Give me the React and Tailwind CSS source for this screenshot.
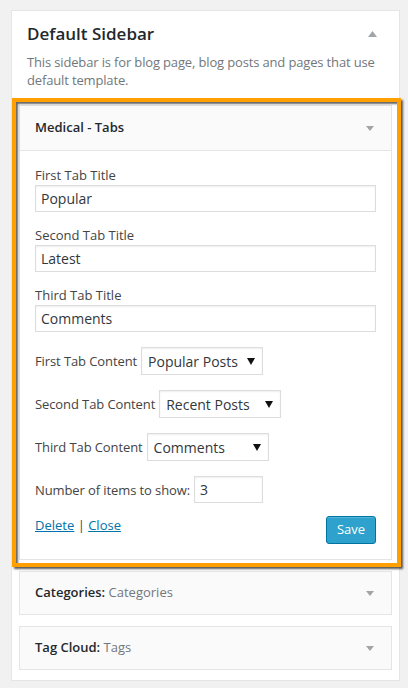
import React from "react";

const font = { fontFamily: '"Open Sans", "Noto Sans", sans-serif' };

function Down({ className = "" }) {
  return (
    <svg width="8" height="5" viewBox="0 0 8 5" className={className}>
      <path d="M0 0 L8 0 L4 5 Z" fill="#a0a5aa" />
    </svg>
  );
}

function Up() {
  return (
    <svg width="9" height="6" viewBox="0 0 9 6">
      <path d="M0 6 L9 6 L4.5 0 Z" fill="#a0a5aa" />
    </svg>
  );
}

function Field({ label, value }) {
  return (
    <div className="mb-[14px]">
      <div className="text-[13px] leading-[18px] text-[#444]">{label}</div>
      <div className="mt-[1px] h-[27px] w-full border border-[#dddddd] bg-white shadow-[inset_0_1px_2px_rgba(0,0,0,0.07)] px-[5px] flex items-center text-[14px] text-[#32373c]">
        {value}
      </div>
    </div>
  );
}

function SelectRow({ label, value }) {
  return (
    <div className="flex items-center gap-[4px] mb-[15px]">
      <span className="text-[13px] leading-[18px] text-[#444] tracking-[-0.1px]">{label}</span>
      <div className="h-[28px] w-[122px] border border-[#dddddd] bg-white shadow-[inset_0_1px_2px_rgba(0,0,0,0.07)] pl-[6px] pr-[7px] flex items-center justify-between text-[14px] text-[#32373c]">
        <span>{value}</span>
        <svg width="8" height="7" viewBox="0 0 8 7">
          <path d="M0 0 L8 0 L4 7 Z" fill="#111" />
        </svg>
      </div>
    </div>
  );
}

function Collapsed({ bold, rest }) {
  return (
    <div className="h-[44px] border border-[#e5e5e5] bg-[#fafafa] flex items-center justify-between pl-[15px] pr-[17px] mb-[11px] last:mb-0">
      <span className="text-[13px] text-[#23282d]">
        <span className="font-semibold">{bold}</span>{" "}
        <span className="text-[#72777c]">{rest}</span>
      </span>
      <Down />
    </div>
  );
}

export default function App() {
  return (
    <div className="min-h-[688px] w-[408px] bg-[#f1f1f1] pt-[10px]" style={font}>
      <div className="ml-[11px] w-[389px] bg-white border border-[#e5e5e5] pt-[12px] pb-[10px] px-[7px]">
        <div className="flex items-center justify-between pl-[8px] pr-[15px]">
          <h2 className="text-[17px] leading-[22px] font-semibold text-[#23282d]">Default Sidebar</h2>
          <Up />
        </div>
        <p className="mt-[8px] pl-[8px] pr-0 text-[13px] leading-[18px] text-[#72777c] tracking-[-0.15px]">
          This sidebar is for blog page, blog posts and pages that use default template.
        </p>

        <div className="relative mt-[16px] mb-[11px] border border-[#e5e5e5] bg-white">
          <div className="pointer-events-none absolute -left-[8px] -top-[8px] -right-[10px] -bottom-[8px] border-4 border-[#ffa000] shadow-[2px_2px_2px_rgba(0,0,0,0.65),inset_2px_2px_2px_rgba(0,0,0,0.6)]" />
          <div className="h-[45px] bg-[#fafafa] border-b border-[#e5e5e5] flex items-center justify-between pl-[15px] pr-[17px]">
            <span className="text-[13px] font-semibold text-[#23282d]">Medical - Tabs</span>
            <Down />
          </div>
          <div className="px-[15px] pt-[15px] pb-[15px]">
            <Field label="First Tab Title" value="Popular" />
            <Field label="Second Tab Title" value="Latest" />
            <Field label="Third Tab Title" value="Comments" />
            <div className="h-[1px]" />
            <SelectRow label="First Tab Content" value="Popular Posts" />
            <SelectRow label="Second Tab Content" value="Recent Posts" />
            <SelectRow label="Third Tab Content" value="Comments" />
            <div className="flex items-center gap-[4px] mb-[14px]">
              <span className="text-[13px] leading-[18px] text-[#444] tracking-[-0.1px]">Number of items to show:</span>
              <div className="h-[27px] w-[69px] border border-[#dddddd] bg-white shadow-[inset_0_1px_2px_rgba(0,0,0,0.07)] px-[5px] flex items-center text-[14px] text-[#32373c]">
                3
              </div>
            </div>
            <div className="flex items-start justify-between">
              <div className="text-[13px] leading-[18px] text-[#444] mt-[-1px]">
                <a href="#" className="text-[#0073aa] underline">Delete</a>
                <span> | </span>
                <a href="#" className="text-[#0073aa] underline">Close</a>
              </div>
              <button className="mt-[-1px] h-[28px] w-[50px] rounded-[3px] border border-[#0074a2] bg-[#2ea2cc] text-white text-[13px] shadow-[inset_0_1px_0_rgba(120,200,230,0.5)]">
                Save
              </button>
            </div>
          </div>
        </div>

        <Collapsed bold="Categories:" rest="Categories" />
        <Collapsed bold="Tag Cloud:" rest="Tags" />
      </div>
    </div>
  );
}
